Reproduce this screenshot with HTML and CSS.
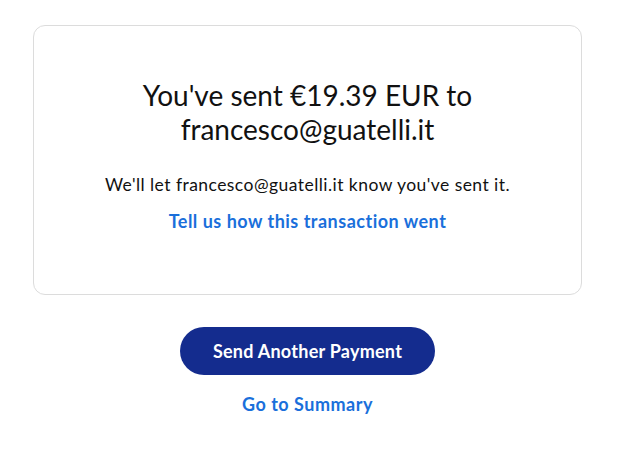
FILE: index.html
```html
<!DOCTYPE html>
<html>
<head>
<meta charset="utf-8">
<link rel="stylesheet" href="styles.css">
</head>
<body>
<main class="page">
  <section class="card">
    <h1 class="title">You've sent €19.39 EUR to<br>francesco@guatelli.it</h1>
    <p class="note">We'll let francesco@guatelli.it know you've sent it.</p>
    <a class="link" href="#">Tell us how this transaction went</a>
  </section>
  <div class="actions">
    <button class="primary">Send Another Payment</button>
    <a class="link summary" href="#">Go to Summary</a>
  </div>
</main>
</body>
</html>
```
FILE: styles.css
```css
html, body {
  margin: 0;
  padding: 0;
  background: #ffffff;
}
body {
  font-family: "Lato", "Open Sans", sans-serif;
  color: #111111;
}
.page {
  padding: 25px 37px 0 33px;
}
.card {
  border: 1px solid #dcdcdc;
  border-radius: 12px;
  box-sizing: border-box;
  height: 270px;
  display: flex;
  flex-direction: column;
  align-items: center;
  padding-top: 52px;
  text-align: center;
}
.title {
  margin: 0;
  font-weight: 400;
  font-size: 28px;
  line-height: 34px;
  color: #111;
}
.note {
  margin: 28px 0 0;
  font-size: 17.5px;
  letter-spacing: 0.45px;
  line-height: 22px;
}
.link {
  color: #1a6fdb;
  font-weight: 700;
  font-size: 18px;
  letter-spacing: 0.5px;
  line-height: 22px;
  text-decoration: none;
}
.card .link {
  margin-top: 14px;
}
.actions {
  display: flex;
  flex-direction: column;
  align-items: center;
  padding-top: 32px;
}
.primary {
  width: 255px;
  height: 48px;
  border: none;
  border-radius: 24px;
  background: #142c8e;
  color: #fff;
  font-family: inherit;
  font-weight: 700;
  font-size: 18px;
  letter-spacing: 0.25px;
}
.summary {
  margin-top: 18px;
  letter-spacing: 0.5px;
}
```
